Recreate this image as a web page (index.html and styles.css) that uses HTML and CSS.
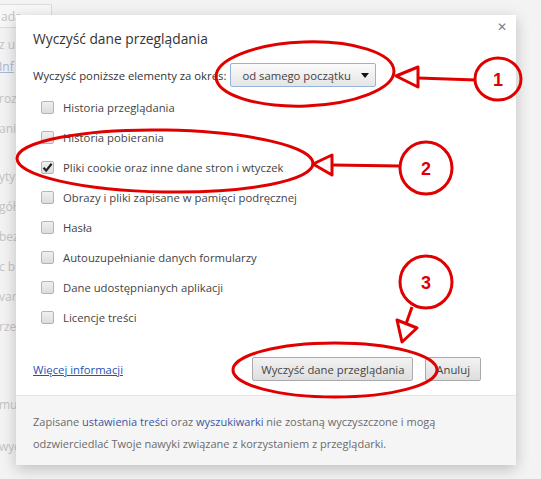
FILE: index.html
```html
<html>

<head>
    <meta charset="utf-8">
    <link rel="stylesheet" href="styles.css">
</head>

<body>
    <div class="page">
        <div class="page-btn">ada</div>
        <div class="page-line l-zu">z u</div>
        <div class="page-line page-link l-inf">Inf</div>
        <div class="page-line l-roz">roz</div>
        <div class="page-line l-ania">ania</div>
        <div class="page-line l-yty">yty</div>
        <div class="page-line">gół</div>
        <div class="page-line">bez</div>
        <div class="page-line">c b</div>
        <div class="page-line">var</div>
        <div class="page-line">rze</div>
        <div class="page-line l-mul">mul</div>
        <div class="page-line l-wyc">wyc</div>
    </div>

    <div class="overlay">
        <div class="dialog">
            <div class="dialog-head">
                <h1>Wyczyść dane przeglądania</h1>
                <span class="close">&#x2715;</span>
            </div>

            <div class="period">
                <label>Wyczyść poniższe elementy za okres:</label>
                <div class="select">
                    <span>od samego początku</span>
                    <span class="caret"></span>
                </div>
            </div>

            <div class="checklist">
                <div class="check-row"><span class="box"></span>Historia przeglądania</div>
                <div class="check-row"><span class="box"></span>Historia pobierania</div>
                <div class="check-row"><span class="box checked"><svg width="11" height="11" viewBox="0 0 11 11"><path d="M1.5 5.8 L4.2 8.6 L9.6 1.8" fill="none" stroke="#222" stroke-width="2.2"/></svg></span>Pliki cookie oraz inne dane stron i wtyczek</div>
                <div class="check-row"><span class="box"></span>Obrazy i pliki zapisane w pamięci podręcznej</div>
                <div class="check-row"><span class="box"></span>Hasła</div>
                <div class="check-row"><span class="box"></span>Autouzupełnianie danych formularzy</div>
                <div class="check-row"><span class="box"></span>Dane udostępnianych aplikacji</div>
                <div class="check-row"><span class="box"></span>Licencje treści</div>
            </div>

            <div class="actions">
                <a class="more" href="#">Więcej informacji</a>
                <div class="buttons">
                    <button class="btn btn-clear">Wyczyść dane przeglądania</button>
                    <button class="btn">Anuluj</button>
                </div>
            </div>

            <div class="footer">
                <div>Zapisane <a href="#">ustawienia treści</a> oraz <a href="#">wyszukiwarki</a> nie zostaną wyczyszczone i mogą</div>
                <div>odzwierciedlać Twoje nawyki związane z korzystaniem z przeglądarki.</div>
            </div>
        </div>
    </div>

    <svg class="marks" width="541" height="479" viewBox="0 0 541 479">
        <g fill="none" stroke="#e10000" stroke-width="3" stroke-linejoin="round">
            <!-- 1 -->
            <ellipse cx="305" cy="74" rx="89" ry="32" transform="rotate(-2 305 74)"/>
            <path d="M476 80 L418 78"/>
            <path d="M396 76 L418 67 L418 87 Z"/>
            <ellipse cx="498" cy="79" rx="23" ry="21"/>
            <!-- 2 -->
            <ellipse cx="165" cy="161" rx="148" ry="31" transform="rotate(1 165 161)"/>
            <path d="M400 166 L332 165"/>
            <path d="M313 164 L332 155 L332 175 Z"/>
            <circle cx="426" cy="168" r="26"/>
            <!-- 3 -->
            <circle cx="426" cy="282" r="26"/>
            <path d="M412 307 L406 324"/>
            <path d="M402 342 L397 320 L417 328 Z"/>
            <ellipse cx="335" cy="370" rx="102" ry="27"/>
        </g>
        <g class="num">
            <text x="498" y="86">1</text>
            <text x="426" y="175">2</text>
            <text x="426" y="289">3</text>
        </g>
    </svg>
</body>

</html>
```
FILE: styles.css
```css
body {
    margin: 0;
    width: 541px;
    height: 479px;
    overflow: hidden;
    position: relative;
    background: #f3f3f3;
    font-family: 'Open Sans', 'Noto Sans', sans-serif;
    font-size: 11.3px;
    color: #333;
}

/* faded settings page behind the dialog */
.page {
    padding-top: 4px;
    color: #c4c4c4;
    font-size: 12px;
}

.page-btn {
    width: 56px;
    height: 24px;
    margin-left: -4px;
    border: 1px solid #dcdcdc;
    background: #f7f7f7;
    line-height: 24px;
    padding-left: 4px;
    box-sizing: border-box;
}

.page-line {
    height: 30px;
    line-height: 30px;
    margin-left: -1px;
}

.page-link {
    color: #aab6d6;
    text-decoration: underline;
}

.l-zu { margin-top: 2px; }
.l-inf { margin-top: -8px; }
.l-roz { margin-top: 2px; }
.l-yty { margin-top: 18px; }
.l-mul { margin-top: 48px; }
.l-wyc { margin-top: 12px; }

.overlay {
    position: absolute;
    left: 16px;
    top: 15px;
}

.dialog {
    width: 500px;
    height: 450px;
    background: #fff;
    box-shadow: 0 4px 14px rgba(0, 0, 0, 0.22);
    display: flex;
    flex-direction: column;
}

.dialog-head {
    display: flex;
    justify-content: space-between;
    padding: 14px 9px 0 17px;
    height: 20px;
}

h1 {
    margin: 0;
    font-size: 13.8px;
    font-weight: normal;
    line-height: 20px;
    color: #333;
}

.close {
    color: #808080;
    font-size: 12px;
    line-height: 12px;
    margin-top: -8px;
}

.period {
    display: flex;
    align-items: center;
    gap: 4px;
    padding: 0 17px;
    margin-top: 14px;
    height: 24px;
}

.select {
    width: 146px;
    height: 24px;
    box-sizing: border-box;
    border: 1px solid #94b4df;
    border-radius: 2px;
    background: linear-gradient(#fbfbfb, #e5e5e5);
    display: flex;
    align-items: center;
    justify-content: space-between;
    padding: 0 6px 0 11px;
    color: #444;
}

.caret {
    width: 0;
    height: 0;
    border-left: 4.5px solid transparent;
    border-right: 4.5px solid transparent;
    border-top: 5px solid #111;
}

.checklist {
    margin-top: 5px;
    padding: 0 25px;
}

.check-row {
    height: 30px;
    display: flex;
    align-items: center;
    color: #444;
}

.box {
    width: 13px;
    height: 13px;
    box-sizing: border-box;
    border: 1px solid #b4b4b4;
    border-radius: 2px;
    background: linear-gradient(#f0f0f0, #dcdcdc);
    margin-right: 9px;
    display: flex;
    align-items: center;
    justify-content: center;
}

.actions {
    margin-top: 25px;
    padding: 0 35px 0 17px;
    display: flex;
    align-items: center;
    justify-content: space-between;
    height: 24px;
}

.more {
    color: #2851b0;
    text-decoration: underline;
}

.buttons {
    display: flex;
    gap: 12px;
}

.btn {
    height: 24px;
    padding: 0 10px;
    font-family: 'Open Sans', 'Noto Sans', sans-serif;
    font-size: 11.3px;
    color: #444;
    border: 1px solid #aaa;
    border-radius: 2px;
    background: linear-gradient(#f2f2f2, #dedede);
    white-space: nowrap;
}

.btn-clear {
    width: 161px;
    padding: 0;
}

.footer {
    margin-top: auto;
    height: 70px;
    box-sizing: border-box;
    padding: 15px 17px 0;
    background: #f5f5f5;
    border-top: 1px solid #e6e6e6;
    font-size: 11px;
    line-height: 22px;
    color: #6b6b6b;
    white-space: nowrap;
}

.footer a {
    color: #3a56a5;
    text-decoration: none;
}

.marks {
    position: absolute;
    left: 0;
    top: 0;
    pointer-events: none;
}

.num text {
    fill: #e10000;
    font-family: 'Liberation Sans', Arial, sans-serif;
    font-weight: bold;
    font-size: 18px;
    text-anchor: middle;
}
```
